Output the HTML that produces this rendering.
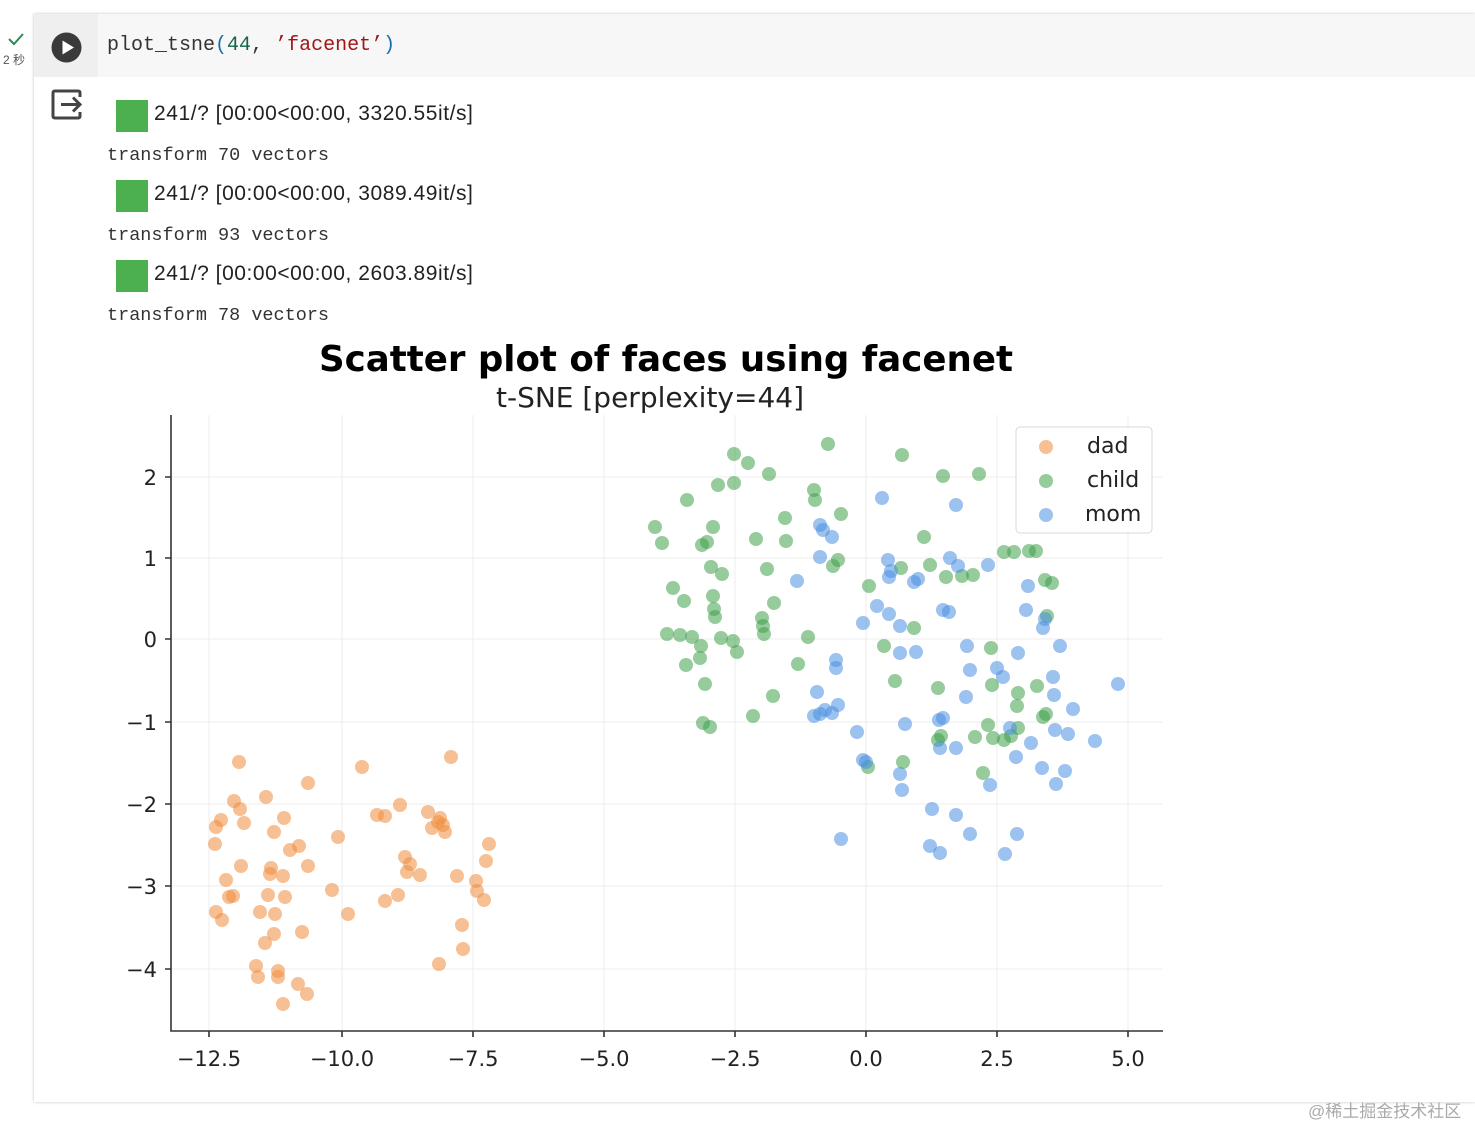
<!DOCTYPE html>
<html><head><meta charset="utf-8"><style>
body{margin:0;width:1475px;height:1125px;background:#fff;position:relative;overflow:hidden;font-family:"Liberation Sans",sans-serif}
.cell{position:absolute;left:34px;top:14px;width:1441px;height:1088px;background:#fff;box-shadow:0 0 3px rgba(0,0,0,.25)}
.gut{position:absolute;left:34px;top:14px;width:64px;height:63px;background:#efefef}
.code{position:absolute;left:98px;top:14px;width:1377px;height:63px;background:#f7f7f7}
.mono{font-family:"Liberation Mono",monospace;}
.t{position:absolute;left:107px;font-size:18.5px;color:#333;letter-spacing:0}
.bar{position:absolute;left:116px;width:32px;height:32px;background:#4caf50}
.pt{position:absolute;left:154px;font-size:21px;color:#222;letter-spacing:0.55px;font-family:"Liberation Sans",sans-serif}
</style></head><body>
<div class="cell"></div><div class="gut"></div><div class="code"></div>
<svg style="position:absolute;left:8px;top:32px" width="16" height="14"><path d="M1 7 L6 12 L15 2" stroke="#2e8b57" stroke-width="2" fill="none"/></svg>
<div style="position:absolute;left:3px;top:51px;font-size:12px;color:#555;font-family:'Liberation Sans','Noto Sans CJK SC',sans-serif">2 秒</div>
<svg style="position:absolute;left:51px;top:32px" width="31" height="31"><circle cx="15.5" cy="15.5" r="15" fill="#3a3a3a"/><path d="M11.5 8.5 L23 15.5 L11.5 22.5Z" fill="#fff"/></svg>
<svg style="position:absolute;left:51px;top:89px" width="32" height="32"><path d="M29 8 V4 Q29 2 27 2 H4 Q2 2 2 4 V27 Q2 29 4 29 H27 Q29 29 29 27 V23" stroke="#444" stroke-width="3" fill="none"/><path d="M10 15.5 H29 M22 8.5 L29 15.5 L22 22.5" stroke="#444" stroke-width="3" fill="none"/></svg>
<div class="mono" style="position:absolute;left:107px;top:34px;font-size:20px;color:#333">plot_tsne<span style="color:#1a6fa8">(</span><span style="color:#116644">44</span>,  <span style="color:#a31515">’facenet’</span><span style="color:#1a6fa8">)</span></div>
<div class="bar" style="top:100px"></div><div class="pt" style="top:102px">241/? [00:00&lt;00:00, 3320.55it/s]</div>
<div class="t mono" style="top:145px">transform 70 vectors</div>
<div class="bar" style="top:180px"></div><div class="pt" style="top:182px">241/? [00:00&lt;00:00, 3089.49it/s]</div>
<div class="t mono" style="top:225px">transform 93 vectors</div>
<div class="bar" style="top:260px"></div><div class="pt" style="top:262px">241/? [00:00&lt;00:00, 2603.89it/s]</div>
<div class="t mono" style="top:305px">transform 78 vectors</div>
<svg style="position:absolute;left:0;top:0" width="1475" height="1125" font-family="DejaVu Sans, sans-serif">
<text x="666" y="371" text-anchor="middle" font-size="35.6" font-weight="bold" fill="#000">Scatter plot of faces using facenet</text>
<text x="650" y="407" text-anchor="middle" font-size="28" fill="#222">t-SNE [perplexity=44]</text>
<g stroke="#ececec" stroke-width="1">
<line x1="209" y1="415" x2="209" y2="1030"/><line x1="342" y1="415" x2="342" y2="1030"/><line x1="473" y1="415" x2="473" y2="1030"/><line x1="604" y1="415" x2="604" y2="1030"/><line x1="735" y1="415" x2="735" y2="1030"/><line x1="866" y1="415" x2="866" y2="1030"/><line x1="997" y1="415" x2="997" y2="1030"/><line x1="1128" y1="415" x2="1128" y2="1030"/>
<line x1="171" y1="477" x2="1162" y2="477"/><line x1="171" y1="558" x2="1162" y2="558"/><line x1="171" y1="639" x2="1162" y2="639"/><line x1="171" y1="722" x2="1162" y2="722"/><line x1="171" y1="804" x2="1162" y2="804"/><line x1="171" y1="886" x2="1162" y2="886"/><line x1="171" y1="969" x2="1162" y2="969"/>
</g>
<g stroke="#333" stroke-width="1.6" fill="none">
<path d="M171 415 V1031 H1163"/>
<path d="M209 1031v6M342 1031v6M473 1031v6M604 1031v6M735 1031v6M866 1031v6M997 1031v6M1128 1031v6"/>
<path d="M171 477h-6M171 558h-6M171 639h-6M171 722h-6M171 804h-6M171 886h-6M171 969h-6"/>
</g>
<g font-size="21" fill="#222" text-anchor="middle">
<text x="209" y="1066">−12.5</text><text x="342" y="1066">−10.0</text><text x="473" y="1066">−7.5</text><text x="604" y="1066">−5.0</text><text x="735" y="1066">−2.5</text><text x="866" y="1066">0.0</text><text x="997" y="1066">2.5</text><text x="1128" y="1066">5.0</text>
</g>
<g font-size="21" fill="#222" text-anchor="end">
<text x="157" y="485">2</text><text x="157" y="566">1</text><text x="157" y="647">0</text><text x="157" y="730">−1</text><text x="157" y="812">−2</text><text x="157" y="894">−3</text><text x="157" y="977">−4</text>
</g>
<g fill="#f08c3c" fill-opacity="0.55">
<circle cx="239" cy="762" r="7"/><circle cx="308" cy="783" r="7"/><circle cx="362" cy="767" r="7"/><circle cx="451" cy="757" r="7"/><circle cx="266" cy="797" r="7"/><circle cx="234" cy="801" r="7"/><circle cx="240" cy="809" r="7"/><circle cx="221" cy="820" r="7"/><circle cx="216" cy="827" r="7"/><circle cx="244" cy="823" r="7"/><circle cx="284" cy="818" r="7"/><circle cx="274" cy="832" r="7"/><circle cx="215" cy="844" r="7"/><circle cx="290" cy="850" r="7"/><circle cx="299" cy="846" r="7"/><circle cx="400" cy="805" r="7"/><circle cx="377" cy="815" r="7"/><circle cx="385" cy="816" r="7"/><circle cx="428" cy="812" r="7"/><circle cx="440" cy="818" r="7"/><circle cx="443" cy="825" r="7"/><circle cx="432" cy="828" r="7"/><circle cx="445" cy="832" r="7"/><circle cx="438" cy="822" r="7"/><circle cx="338" cy="837" r="7"/><circle cx="489" cy="844" r="7"/><circle cx="241" cy="866" r="7"/><circle cx="271" cy="868" r="7"/><circle cx="270" cy="874" r="7"/><circle cx="283" cy="876" r="7"/><circle cx="308" cy="866" r="7"/><circle cx="405" cy="857" r="7"/><circle cx="410" cy="864" r="7"/><circle cx="407" cy="872" r="7"/><circle cx="420" cy="875" r="7"/><circle cx="457" cy="876" r="7"/><circle cx="486" cy="861" r="7"/><circle cx="226" cy="880" r="7"/><circle cx="476" cy="881" r="7"/><circle cx="477" cy="891" r="7"/><circle cx="484" cy="900" r="7"/><circle cx="229" cy="897" r="7"/><circle cx="233" cy="896" r="7"/><circle cx="268" cy="895" r="7"/><circle cx="285" cy="897" r="7"/><circle cx="332" cy="890" r="7"/><circle cx="398" cy="895" r="7"/><circle cx="385" cy="901" r="7"/><circle cx="216" cy="912" r="7"/><circle cx="222" cy="920" r="7"/><circle cx="260" cy="912" r="7"/><circle cx="275" cy="914" r="7"/><circle cx="348" cy="914" r="7"/><circle cx="462" cy="925" r="7"/><circle cx="274" cy="934" r="7"/><circle cx="302" cy="932" r="7"/><circle cx="265" cy="943" r="7"/><circle cx="463" cy="949" r="7"/><circle cx="256" cy="966" r="7"/><circle cx="278" cy="971" r="7"/><circle cx="278" cy="977" r="7"/><circle cx="258" cy="977" r="7"/><circle cx="439" cy="964" r="7"/><circle cx="298" cy="984" r="7"/><circle cx="307" cy="994" r="7"/><circle cx="283" cy="1004" r="7"/>
</g>
<g fill="#3fa04a" fill-opacity="0.55">
<circle cx="828" cy="444" r="7"/><circle cx="734" cy="454" r="7"/><circle cx="748" cy="463" r="7"/><circle cx="902" cy="455" r="7"/><circle cx="769" cy="474" r="7"/><circle cx="943" cy="476" r="7"/><circle cx="979" cy="474" r="7"/><circle cx="718" cy="485" r="7"/><circle cx="734" cy="483" r="7"/><circle cx="814" cy="490" r="7"/><circle cx="687" cy="500" r="7"/><circle cx="815" cy="500" r="7"/><circle cx="841" cy="514" r="7"/><circle cx="785" cy="518" r="7"/><circle cx="713" cy="527" r="7"/><circle cx="655" cy="527" r="7"/><circle cx="662" cy="543" r="7"/><circle cx="702" cy="545" r="7"/><circle cx="707" cy="542" r="7"/><circle cx="756" cy="539" r="7"/><circle cx="786" cy="541" r="7"/><circle cx="924" cy="537" r="7"/><circle cx="1004" cy="552" r="7"/><circle cx="1014" cy="552" r="7"/><circle cx="1029" cy="551" r="7"/><circle cx="1036" cy="551" r="7"/><circle cx="838" cy="560" r="7"/><circle cx="833" cy="566" r="7"/><circle cx="711" cy="567" r="7"/><circle cx="722" cy="574" r="7"/><circle cx="767" cy="569" r="7"/><circle cx="901" cy="568" r="7"/><circle cx="930" cy="565" r="7"/><circle cx="946" cy="577" r="7"/><circle cx="962" cy="576" r="7"/><circle cx="973" cy="575" r="7"/><circle cx="1045" cy="580" r="7"/><circle cx="1052" cy="583" r="7"/><circle cx="673" cy="588" r="7"/><circle cx="684" cy="601" r="7"/><circle cx="713" cy="596" r="7"/><circle cx="774" cy="603" r="7"/><circle cx="869" cy="586" r="7"/><circle cx="714" cy="609" r="7"/><circle cx="715" cy="617" r="7"/><circle cx="762" cy="618" r="7"/><circle cx="763" cy="626" r="7"/><circle cx="764" cy="634" r="7"/><circle cx="667" cy="634" r="7"/><circle cx="680" cy="635" r="7"/><circle cx="692" cy="637" r="7"/><circle cx="701" cy="646" r="7"/><circle cx="721" cy="638" r="7"/><circle cx="733" cy="641" r="7"/><circle cx="737" cy="652" r="7"/><circle cx="808" cy="637" r="7"/><circle cx="914" cy="628" r="7"/><circle cx="884" cy="646" r="7"/><circle cx="991" cy="648" r="7"/><circle cx="1047" cy="616" r="7"/><circle cx="686" cy="665" r="7"/><circle cx="700" cy="658" r="7"/><circle cx="798" cy="664" r="7"/><circle cx="895" cy="681" r="7"/><circle cx="705" cy="684" r="7"/><circle cx="773" cy="696" r="7"/><circle cx="938" cy="688" r="7"/><circle cx="992" cy="685" r="7"/><circle cx="1018" cy="693" r="7"/><circle cx="1037" cy="686" r="7"/><circle cx="1017" cy="706" r="7"/><circle cx="1046" cy="714" r="7"/><circle cx="1043" cy="717" r="7"/><circle cx="753" cy="716" r="7"/><circle cx="703" cy="723" r="7"/><circle cx="710" cy="727" r="7"/><circle cx="988" cy="725" r="7"/><circle cx="1018" cy="728" r="7"/><circle cx="941" cy="736" r="7"/><circle cx="938" cy="740" r="7"/><circle cx="975" cy="737" r="7"/><circle cx="993" cy="738" r="7"/><circle cx="1004" cy="740" r="7"/><circle cx="1011" cy="736" r="7"/><circle cx="903" cy="762" r="7"/><circle cx="868" cy="767" r="7"/><circle cx="983" cy="773" r="7"/>
</g>
<g fill="#4a90e2" fill-opacity="0.55">
<circle cx="882" cy="498" r="7"/><circle cx="956" cy="505" r="7"/><circle cx="820" cy="525" r="7"/><circle cx="823" cy="530" r="7"/><circle cx="832" cy="537" r="7"/><circle cx="797" cy="581" r="7"/><circle cx="820" cy="557" r="7"/><circle cx="888" cy="560" r="7"/><circle cx="891" cy="571" r="7"/><circle cx="889" cy="577" r="7"/><circle cx="914" cy="582" r="7"/><circle cx="918" cy="579" r="7"/><circle cx="950" cy="558" r="7"/><circle cx="958" cy="566" r="7"/><circle cx="988" cy="565" r="7"/><circle cx="1028" cy="586" r="7"/><circle cx="877" cy="606" r="7"/><circle cx="889" cy="614" r="7"/><circle cx="863" cy="623" r="7"/><circle cx="900" cy="626" r="7"/><circle cx="943" cy="610" r="7"/><circle cx="949" cy="612" r="7"/><circle cx="1026" cy="610" r="7"/><circle cx="1043" cy="628" r="7"/><circle cx="1045" cy="619" r="7"/><circle cx="1060" cy="646" r="7"/><circle cx="967" cy="646" r="7"/><circle cx="900" cy="653" r="7"/><circle cx="916" cy="652" r="7"/><circle cx="1018" cy="653" r="7"/><circle cx="836" cy="660" r="7"/><circle cx="836" cy="668" r="7"/><circle cx="970" cy="670" r="7"/><circle cx="997" cy="668" r="7"/><circle cx="1003" cy="677" r="7"/><circle cx="1053" cy="677" r="7"/><circle cx="1054" cy="695" r="7"/><circle cx="966" cy="697" r="7"/><circle cx="817" cy="692" r="7"/><circle cx="838" cy="705" r="7"/><circle cx="814" cy="716" r="7"/><circle cx="820" cy="714" r="7"/><circle cx="825" cy="710" r="7"/><circle cx="832" cy="713" r="7"/><circle cx="1073" cy="709" r="7"/><circle cx="1118" cy="684" r="7"/><circle cx="905" cy="724" r="7"/><circle cx="943" cy="718" r="7"/><circle cx="939" cy="720" r="7"/><circle cx="857" cy="732" r="7"/><circle cx="1010" cy="728" r="7"/><circle cx="1055" cy="730" r="7"/><circle cx="1068" cy="734" r="7"/><circle cx="1095" cy="741" r="7"/><circle cx="940" cy="748" r="7"/><circle cx="956" cy="748" r="7"/><circle cx="1031" cy="743" r="7"/><circle cx="863" cy="760" r="7"/><circle cx="866" cy="762" r="7"/><circle cx="900" cy="774" r="7"/><circle cx="1016" cy="757" r="7"/><circle cx="1042" cy="768" r="7"/><circle cx="1065" cy="771" r="7"/><circle cx="990" cy="785" r="7"/><circle cx="1056" cy="784" r="7"/><circle cx="902" cy="790" r="7"/><circle cx="932" cy="809" r="7"/><circle cx="956" cy="815" r="7"/><circle cx="970" cy="834" r="7"/><circle cx="1017" cy="834" r="7"/><circle cx="841" cy="839" r="7"/><circle cx="930" cy="846" r="7"/><circle cx="940" cy="853" r="7"/><circle cx="1005" cy="854" r="7"/>
</g>
<rect x="1016" y="427" width="136" height="106" rx="4" fill="#fff" fill-opacity="0.85" stroke="#d8d8d8"/>
<circle cx="1046" cy="447" r="7" fill="#f08c3c" fill-opacity="0.55"/>
<circle cx="1046" cy="481" r="7" fill="#3fa04a" fill-opacity="0.55"/>
<circle cx="1046" cy="515" r="7" fill="#4a90e2" fill-opacity="0.55"/>
<g font-size="22" fill="#222"><text x="1087" y="453">dad</text><text x="1087" y="487">child</text><text x="1085" y="521">mom</text></g>
</svg>
<div style="position:absolute;left:1308px;top:1097px;font-size:17px;color:#aaa;font-family:'Liberation Sans','Noto Sans CJK SC',sans-serif">@稀土掘金技术社区</div>
</body></html>
